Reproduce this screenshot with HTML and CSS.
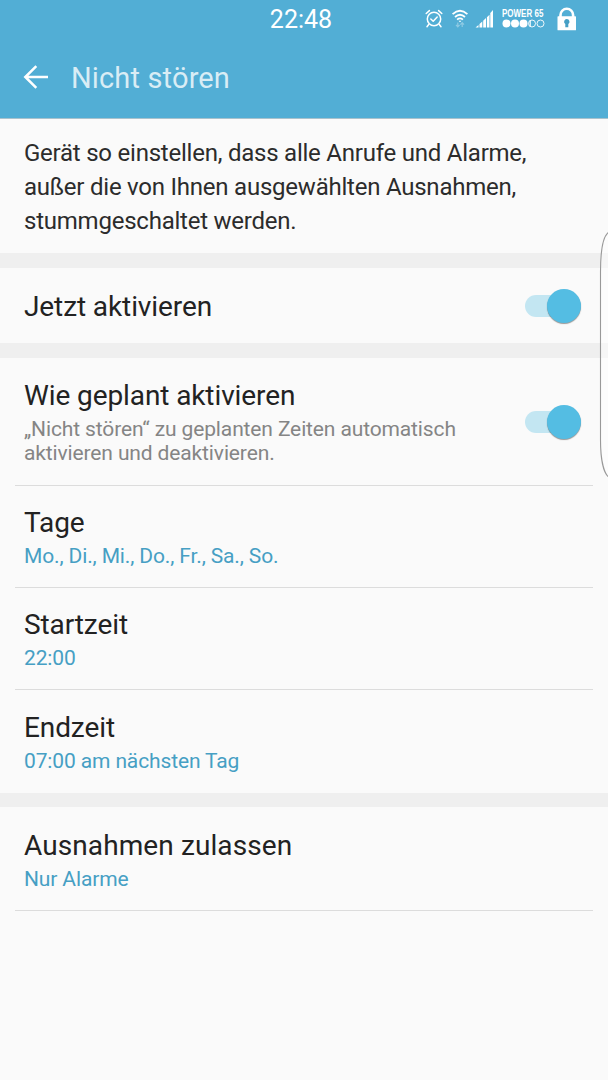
FILE: index.html
```html
<!DOCTYPE html>
<html lang="de">
<head>
<meta charset="utf-8">
<title>Nicht stören</title>
<link rel="stylesheet" href="styles.css">
</head>
<body>
<div class="screen">
  <header class="header">
    <div class="status">
      <span class="clock">22:48</span>
      <div class="indicators">
        <svg class="alarm" width="18" height="20" viewBox="0 0 18 20" fill="none" stroke="#fff" stroke-width="1.5" stroke-linecap="round" stroke-linejoin="round"><circle cx="9" cy="10" r="6.7"/><path d="M1.2 4.5 4.4 1.6M16.8 4.5 13.6 1.6M3.7 15.5 2 17.7M14.3 15.5l1.7 2.2M5.8 10l2.4 2.3 4-4.3"/></svg>
        <svg class="wifi" width="18" height="20" viewBox="0 0 18 20" fill="none" stroke="#fff" stroke-width="1.8"><path d="M1.6 5.2Q9-1.6 16.4 5.2M4 8Q9 3.5 14 8M6.1 10.6Q9 8.2 11.9 10.6"/><path d="M7.5 11.7h3L9 13.3z" fill="#fff" stroke="none"/><path d="M6.8 13.5v4.2M5 15.8l1.8 2 1.8-2M11.2 18v-4.2M9.4 15.7l1.8-2 1.8 2" stroke-width="1.2" opacity=".35"/></svg>
        <svg class="signal" width="19" height="20" viewBox="0 0 19 20" fill="#fff"><path d="M.5 18.500l3-2.600v2.600zM4.500 15.100l2.800-2.600v6H4.500zM8.200 11.700 11 9.100v9.400H8.200zM11.900 8.300l2.600-2.500v12.700h-2.600zM15.300 4l2.700-3v17.500h-2.700z"/></svg>
        <div class="power">
          <span class="power-text">POWER 65</span>
          <svg width="43" height="9" viewBox="0 0 43 9" fill="#fff" stroke="#fff"><g stroke="none"><circle cx="4.500" cy="4.500" r="4"/><circle cx="13" cy="4.500" r="4"/><circle cx="21.500" cy="4.500" r="4"/></g><g fill="none" stroke-width=".9"><circle cx="30" cy="4.500" r="3.500"/><circle cx="38.500" cy="4.500" r="3.500"/><path d="M28.200 1.500v6" stroke-width="1.200"/></g></svg>
        </div>
        <svg class="lock" width="20" height="24" viewBox="0 0 20 24"><path d="M3.500 10V8a6.300 6.300 0 0 1 12.600 0v2" fill="none" stroke="#fff" stroke-width="2.600"/><rect x=".5" y="9.300" width="18.500" height="14" rx=".6" fill="#fff"/><path d="M9.800 12a2.800 2.800 0 0 0-1.500 5.100v3.100h3v-3.100a2.800 2.800 0 0 0-1.500-5.100z" fill="#459fc5"/></svg>
      </div>
    </div>
    <div class="titlebar">
      <svg class="back" width="26" height="26" viewBox="0 0 26 26" fill="none" stroke="#fff" stroke-width="2.500"><path d="M2.300 13H25M13.300 2.200 2.300 13l11 10.800"/></svg>
      <h1 class="title">Nicht stören</h1>
    </div>
  </header>
  <main>
    <p class="intro">Gerät so einstellen, dass alle Anrufe und Alarme,<br>außer die von Ihnen ausgewählten Ausnahmen,<br>stummgeschaltet werden.</p>
    <section class="group group-now">
      <div class="row row-now"><h2 class="name">Jetzt aktivieren</h2><span class="switch"><span class="thumb"></span></span></div>
    </section>
    <section class="group group-plan">
      <div class="row row-plan">
        <div><h2 class="name">Wie geplant aktivieren</h2><p class="hint">„Nicht stören“ zu geplanten Zeiten automatisch<br>aktivieren und deaktivieren.</p></div>
        <span class="switch"><span class="thumb"></span></span>
      </div>
      <div class="row"><div><h2 class="name">Tage</h2><p class="value">Mo., Di., Mi., Do., Fr., Sa., So.</p></div></div>
      <div class="row"><div><h2 class="name">Startzeit</h2><p class="value">22:00</p></div></div>
      <div class="row row-end"><div><h2 class="name">Endzeit</h2><p class="value">07:00 am nächsten Tag</p></div></div>
    </section>
    <section class="group">
      <div class="row row-exceptions"><div><h2 class="name">Ausnahmen zulassen</h2><p class="value">Nur Alarme</p></div></div>
    </section>
  </main>
  <svg class="edge" width="10" height="250" viewBox="0 0 10 250"><path d="M10 2C5 5 1.500 18 1.500 42V210c0 22 4 34 8.500 37.500z" fill="#fff" fill-opacity=".45"/><path d="M10 2C5 5 1.500 18 1.500 42V210c0 22 4 34 8.500 37.500" fill="none" stroke="#999" stroke-width="1.100"/></svg>
</div>
</body>
</html>
```
FILE: styles.css
```css
* { box-sizing: border-box; margin: 0; padding: 0; }
body { font-family: Roboto, sans-serif; background: #fafafa; color: #222; }
h1, h2 { font-weight: 400; }
svg { display: block; flex: none; }
.screen { position: relative; width: 608px; height: 1080px; overflow: hidden; }
.header { height: 119px; background: #52aed5; color: #fff; border-bottom: 1px solid #a9c2cd; }
.status { display: grid; grid-template-columns: 1fr auto 1fr; height: 38px; align-items: center; }
.clock { grid-column: 2; font-size: 25px; line-height: 38px; padding-top: 1px; margin-left: -6px; }
.indicators { display: flex; justify-content: flex-end; align-items: center; height: 36px; padding-right: 31px; padding-bottom: 2px; }
.wifi { margin-left: 8px; }
.signal { margin: 0 8px 0 6px; }
.power { width: 43px; margin-right: 12px; }
.power-text { display: block; width: 54px; font-family: "Liberation Sans", sans-serif; font-weight: 700; font-size: 10px; line-height: 10px; white-space: nowrap; transform: scaleX(.8); transform-origin: 0 50%; }
.titlebar { display: flex; align-items: center; height: 78px; padding-left: 23px; }
.title { margin-left: 22px; padding-top: 2px; font-size: 29px; line-height: 40px; letter-spacing: .15px; color: rgba(255,255,255,.78); }
.intro { height: 134px; padding: 17px 24px 0; font-size: 24px; line-height: 34px; letter-spacing: -.23px; white-space: nowrap; color: #2c2c2c; }
.group { border-top: 14px solid #efefef; }
.group-now { border-top-width: 15px; }
.group-plan { border-top-width: 15px; }
.row { display: flex; justify-content: space-between; height: 102px; margin-left: 15px; margin-right: 15px; padding: 20px 12px 0 9px; border-bottom: 1px solid #dcdcdc; }
.row-now { height: 75px; align-items: center; padding-top: 1px; border-bottom: 0; }
.row-now .name { padding-top: 2px; }
.row-plan { height: 128px; align-items: center; padding-top: 1px; }
.row-end { height: 103px; border-bottom: 0; padding-top: 21px; }
.row-exceptions { height: 104px; padding-top: 22px; }
.name { font-size: 28px; line-height: 34px; letter-spacing: -.1px; white-space: nowrap; }
.row-exceptions .name { letter-spacing: .1px; }
.hint, .value { font-size: 21px; line-height: 24px; white-space: nowrap; letter-spacing: -.13px; }
.hint { color: #858585; margin-top: 4px; }
.value { color: #469fc4; margin-top: 4px; }
.switch { display: flex; justify-content: flex-end; align-items: center; width: 56px; height: 22px; border-radius: 11px; background: #c3e6f2; }
.thumb { width: 34px; height: 34px; flex: none; border-radius: 50%; background: #54bde3; box-shadow: 0 1px 1px rgba(0,0,0,.4); }
.edge { position: absolute; right: 0; top: 230px; transform: translateX(1px); }
```
